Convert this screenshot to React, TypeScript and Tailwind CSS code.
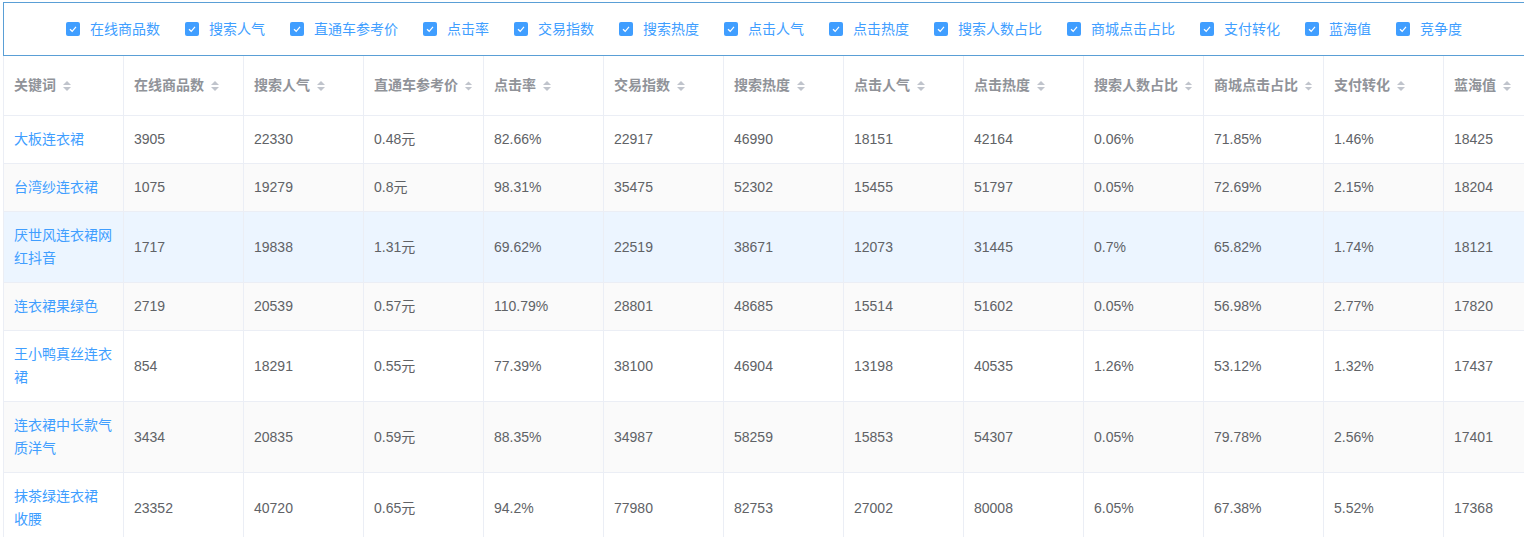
import React from "react";

const filters = ["在线商品数","搜索人气","直通车参考价","点击率","交易指数","搜索热度","点击人气","点击热度","搜索人数占比","商城点击占比","支付转化","蓝海值","竞争度"];
const headers = ["关键词","在线商品数","搜索人气","直通车参考价","点击率","交易指数","搜索热度","点击人气","点击热度","搜索人数占比","商城点击占比","支付转化","蓝海值","竞争度"];
const rows: [string[], string[], number][] = [
  [["大板连衣裙"], ["3905","22330","0.48元","82.66%","22917","46990","18151","42164","0.06%","71.85%","1.46%","18425","1"], 48],
  [["台湾纱连衣裙"], ["1075","19279","0.8元","98.31%","35475","52302","15455","51797","0.05%","72.69%","2.15%","18204","1"], 48],
  [["厌世风连衣裙网","红抖音"], ["1717","19838","1.31元","69.62%","22519","38671","12073","31445","0.7%","65.82%","1.74%","18121","1"], 71],
  [["连衣裙果绿色"], ["2719","20539","0.57元","110.79%","28801","48685","15514","51602","0.05%","56.98%","2.77%","17820","1"], 48],
  [["王小鸭真丝连衣","裙"], ["854","18291","0.55元","77.39%","38100","46904","13198","40535","1.26%","53.12%","1.32%","17437","1"], 71],
  [["连衣裙中长款气","质洋气"], ["3434","20835","0.59元","88.35%","34987","58259","15853","54307","0.05%","79.78%","2.56%","17401","1"], 71],
  [["抹茶绿连衣裙","收腰"], ["23352","40720","0.65元","94.2%","77980","82753","27002","80008","6.05%","67.38%","5.52%","17368","1"], 71],
];

function Check() {
  return (
    <span className="w-[14px] h-[14px] rounded-[2px] bg-[#409eff] flex items-center justify-center">
      <svg width="10" height="10" viewBox="0 0 10 10"><path d="M2 5.2 L4.2 7.3 L8 2.8" stroke="white" strokeWidth="1.2" fill="none" /></svg>
    </span>
  );
}
function Sort() {
  return (
    <svg width="10" height="12" viewBox="0 0 10 12" className="ml-[6px]">
      <path d="M5 1 L9 5 H1 Z" fill="#c0c4cc" />
      <path d="M5 11 L9 7 H1 Z" fill="#c0c4cc" />
    </svg>
  );
}

export default function App() {
  return (
    <div className="w-[1524px] h-[537px] overflow-hidden bg-white text-[14px] text-[#606266]" style={{ fontFamily: '"Liberation Sans","Noto Sans CJK SC",sans-serif' }}>
      <div className="mt-[2px] ml-[3px] h-[54px] border border-[#5a9fd6] border-r-0 flex items-center justify-center gap-[25px]">
        {filters.map(f => (
          <div key={f} className="flex items-center gap-[10px] text-[#409eff]"><Check /><span>{f}</span></div>
        ))}
      </div>
      <div className="ml-[3px] border-l border-[#ebeef5]">
        <div className="flex h-[60px] border-b border-[#ebeef5]">
          {headers.map(h => (
            <div key={h} className="w-[120px] shrink-0 border-r border-[#ebeef5] px-[10px] flex items-center font-bold text-[#909399] whitespace-nowrap">{h}<Sort /></div>
          ))}
        </div>
        {rows.map((r, i) => (
          <div key={i} className={`flex border-b border-[#ebeef5] ${i === 2 ? "bg-[#ecf5ff]" : i % 2 === 1 ? "bg-[#fafafa]" : "bg-white"}`} style={{ height: r[2] }}>
            <div className="w-[120px] shrink-0 border-r border-[#ebeef5] px-[10px] flex flex-col justify-center text-[#409eff] leading-[23px]">
              {r[0].map(t => <div key={t}>{t}</div>)}
            </div>
            {r[1].map((c, j) => (
              <div key={j} className="w-[120px] shrink-0 border-r border-[#ebeef5] px-[10px] flex items-center">{c}</div>
            ))}
          </div>
        ))}
      </div>
    </div>
  );
}
